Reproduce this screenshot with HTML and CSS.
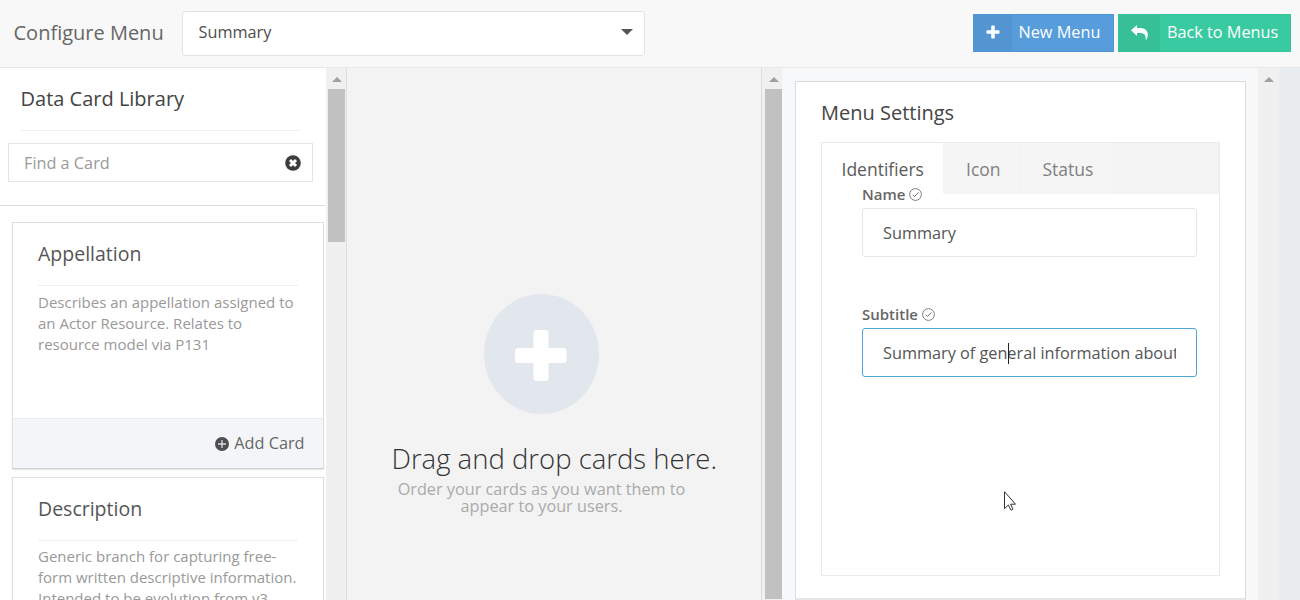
FILE: index.html
```html
<!DOCTYPE html>
<html lang="en">
<head>
<meta charset="utf-8">
<title>Configure Menu</title>
<link rel="stylesheet" href="styles.css">
</head>
<body>
<header class="topbar">
  <h1 class="page-title"><span>Configure Menu</span></h1>
  <div class="select"><span>Summary</span><i class="caret"></i></div>
  <div class="actions">
    <button class="btn btn-blue"><span class="btn-icon"><svg width="14" height="14" viewBox="0 0 14 14"><path fill="#fff" d="M5.2 1.3q0-.8.8-.8h2q.8 0 .8.8v3.9h3.9q.8 0 .8.8v2q0 .8-.8.8H8.800v3.900q0 .8-.8.8H6q-.8 0-.8-.8V8.800H1.300q-.8 0-.8-.8V6q0-.8.8-.8h3.900z"/></svg></span><span class="btn-text">New Menu</span></button>
    <button class="btn btn-green"><span class="btn-icon"><svg width="17" height="15" viewBox="0 0 17 15"><path fill="#fff" d="M0 5.300 6 0v3h2.500c5.500 0 8.300 2.400 8.300 6.800 0 1.800-.6 3.400-1.600 5-.2.300-.5.200-.5-.1.400-5-1.700-6.700-6.200-6.700H6v2.900z"/></svg></span><span class="btn-text">Back to Menus</span></button>
  </div>
</header>
<main class="columns">
  <section class="library">
    <h2 class="library-title"><span>Data Card Library</span></h2>
    <div class="search"><span>Find a Card</span>
      <svg width="16" height="16" viewBox="0 0 16 16"><circle cx="8" cy="8" r="7.800" fill="#3d3d3d"/><path d="M5 5l6 6M11 5l-6 6" stroke="#fff" stroke-width="3"/></svg>
    </div>
    <div class="cards">
      <article class="card">
        <h3 class="card-title"><span>Appellation</span></h3>
        <p class="card-text">Describes an appellation assigned to<br>an Actor Resource. Relates to<br>resource model via P131</p>
        <footer class="card-footer"><svg width="14" height="14" viewBox="0 0 14 14"><circle cx="7" cy="7" r="7" fill="#4f4f4f"/><path d="M7 3v8M3 7h8" stroke="#dfe0e2" stroke-width="1.300"/></svg><span>Add Card</span></footer>
      </article>
      <article class="card">
        <h3 class="card-title"><span>Description</span></h3>
        <p class="card-text card-text-tight">Generic branch for capturing free-<br>form written descriptive information.<br>Intended to be evolution from v3</p>
        <footer class="card-footer"></footer>
      </article>
    </div>
  </section>
  <div class="scroll scroll-left"><i class="arrow"></i><div class="thumb thumb-short"></div></div>
  <section class="dropzone">
    <svg class="drop-icon" width="116" height="120" viewBox="0 0 116 120"><ellipse cx="57.500" cy="60" rx="57.500" ry="60" fill="#e2e7ee"/><path fill="#fff" d="M49.500 39q0-3 3-3h9q3 0 3 3v15h15q3 0 3 3v9q0 3-3 3h-15v15q0 3-3 3h-9q-3 0-3-3V69h-15.500q-3 0-3-3v-9q0-3 3-3h15.500z"/></svg>
    <h2 class="drop-title"><span>Drag and drop cards here.</span></h2>
    <p class="drop-text">Order your cards as you want them to<br>appear to your users.</p>
  </section>
  <div class="scroll scroll-mid"><i class="arrow"></i><div class="thumb"></div></div>
  <section class="settings">
    <div class="panel">
      <h2 class="panel-title"><span>Menu Settings</span></h2>
      <div class="tabbox">
        <nav class="tabs"><a class="tab active">Identifiers</a><a class="tab tab-icon">Icon</a><a class="tab tab-status">Status</a></nav>
        <div class="form">
          <label class="label"><span>Name</span><svg width="13" height="13" viewBox="0 0 13 13" fill="none" stroke="#6e6e6e"><circle cx="6.500" cy="6.500" r="5.900" stroke-width=".9"/><path d="M3.800 6.900l1.800 1.500 3.900-4"/></svg></label>
          <div class="field"><span>Summary</span></div>
          <label class="label label-second"><span>Subtitle</span><svg width="13" height="13" viewBox="0 0 13 13" fill="none" stroke="#6e6e6e"><circle cx="6.500" cy="6.500" r="5.900" stroke-width=".9"/><path d="M3.800 6.900l1.800 1.500 3.900-4"/></svg></label>
          <div class="field focused"><span>Summary of general information about</span><i class="text-cursor"></i></div>
        </div>
      </div>
    </div>
  </section>
  <div class="scroll scroll-right"><i class="arrow"></i></div>
</main>
<svg class="pointer" width="13" height="20" viewBox="0 0 13 20"><path d="M.5.700v17l3.900-3.700 2.300 4.900q1.300.6 2.200-.8L6.700 13.200h4.800z" fill="#fff" stroke="#333"/></svg>
</body>
</html>
```
FILE: styles.css
```css
* { box-sizing: border-box; }
body { margin: 0; width: 1300px; height: 600px; overflow: hidden; display: flex; flex-direction: column; background: #e9edf0; font-family: "Open Sans", sans-serif; color: #4d4d4d; }
h1, h2, h3, p { margin: 0; font-weight: 400; }
i, svg { display: block; flex: none; }
span { white-space: nowrap; }

.topbar { flex: none; display: flex; align-items: flex-start; height: 68px; padding: 11px 9px 0 13.500px; background: #f8f8f8; border-bottom: 1px solid #e7e7e7; }
.page-title { width: 168.500px; font-size: 20px; line-height: 43px; color: #666; }
.select { display: flex; justify-content: space-between; width: 463px; height: 45px; padding: 0 11px 0 15.500px; background: #fff; border: 1px solid #e1e3e6; border-radius: 3px; font-size: 16.250px; line-height: 41px; }
.caret { margin-top: 17px; border: 6px solid transparent; border-top-color: #555; border-bottom: 0; }
.actions { display: flex; gap: 4px; margin: 3px 0 0 auto; }
.btn { display: flex; height: 38px; padding: 0; border: 1px solid; font: 16.250px/35px "Open Sans", sans-serif; color: #fff; text-align: left; }
.btn-blue { width: 141px; background: #579ddb; border-color: #5095d5; }
.btn-green { width: 173px; background: #3acaa1; border-color: #35c59b; }
.btn-icon { display: flex; justify-content: center; width: 38px; height: 36px; padding-top: 10px; background: #5295d0; }
.btn-green .btn-icon { width: 41px; background: #37c098; }
.btn-text { padding-left: 6.500px; }
.btn-green .btn-text { padding-left: 7px; }

.columns { flex: 1; min-height: 0; display: flex; }
.library { width: 326px; background: #fff; overflow: hidden; }
.library-title { height: 63px; margin: 0 26px 0 20.500px; border-bottom: 1px solid #f0f0f0; font-size: 20px; line-height: 62px; color: #444; }
.search { display: flex; justify-content: space-between; align-items: center; width: 305px; height: 39px; margin: 12px 0 0 8px; padding: 1px 11px 0 15px; border: 1px solid #e5e5e5; font-size: 16.250px; line-height: 38px; color: #999; }
.cards { display: flex; flex-direction: column; gap: 8px; width: 325px; margin-top: 23px; padding: 16px 1px 0 12px; border-top: 1px solid #dcdcdc; }
.card { display: flex; flex-direction: column; flex: none; height: 247px; border: 1px solid #dedfe1; border-bottom-color: #cfd2d5; box-shadow: 0 1px 1px #e8e8e8; }
.card-title { height: 63px; margin: 0 25px; border-bottom: 1px solid #f0f0f0; font-size: 19.500px; line-height: 62px; color: #555; }
.card-text { padding: 6px 0 0 25px; font-size: 15px; line-height: 21px; color: #999; white-space: nowrap; }
.card-text-tight { padding-top: 5px; }
.card-footer { display: flex; justify-content: flex-end; align-items: center; gap: 5px; height: 50px; margin-top: auto; padding-right: 18.500px; background: #f4f5f8; border-top: 1px solid #ebedef; font-size: 16.250px; line-height: 49px; color: #666; }

.scroll { flex: none; width: 21px; padding: 9px 1px 0 2px; background: #f0f0f0; }
.scroll-left { border-right: 1px solid #dcdcdc; }
.scroll-mid { padding: 9px 0 0 3px; border-left: 1px solid #dcdcdc; }
.arrow { width: 0; margin-left: 3.500px; border: 5px solid transparent; border-bottom-color: #a0a0a0; border-top: 0; }
.thumb { height: 510px; margin-top: 7px; background: #c1c1c1; }
.thumb-short { height: 153px; }

.dropzone { width: 414px; padding-top: 226px; background: #f3f3f3; }
.drop-icon { margin: 0 auto 0 137px; }
.drop-title { padding: 22px 0 0 44.500px; font-size: 27.500px; font-weight: 300; line-height: 46px; color: #333; }
.drop-text { width: 389px; margin-top: -1px; font-size: 16.250px; line-height: 17px; color: #aaa; text-align: center; }

.settings { width: 476px; padding: 13px 12px 0 13px; background: #f6f8fa; }
.panel { height: 519px; padding: 0 25px; background: #fff; border: 1px solid #d9dcdf; border-bottom: 2px solid #e4e5e6; }
.panel-title { height: 60px; font-size: 20px; line-height: 62px; color: #444; }
.tabbox { height: 434px; border: 1px solid #ebebeb; }
.tabs { display: flex; height: 51px; background: #f3f3f3; font-size: 17.500px; line-height: 53px; color: #808080; }
.tab { width: 121px; padding-left: 19.500px; }
.active { background: #fff; color: #5a5a5a; }
.tab-icon { width: 77px; padding-left: 23px; background: #f5f5f5; }
.tab-status { width: 93px; padding-left: 21.500px; background: #f5f5f5; border-left: 1px solid #f1f1f1; }
.form { padding: 0 22px 0 40px; }
.label { display: flex; align-items: flex-start; gap: 4px; height: 14px; font-size: 15px; line-height: 0; font-weight: 600; color: #666; }
.label svg { margin-top: -6px; }
.label-second { height: 71px; padding-top: 57px; }
.field { position: relative; height: 49px; padding-left: 20px; border: 1px solid #e6e6e6; border-radius: 3px; font-size: 16.250px; line-height: 48px; color: #555; }
.field span { display: block; width: 293px; overflow: hidden; }
.focused { border-color: #4fa5d8; }
.text-cursor { position: absolute; left: 145px; top: 14px; width: 1px; height: 21px; background: #222; }
.scroll-right { padding-left: 2px; }
.pointer { position: absolute; left: 1004px; top: 491px; }
```
